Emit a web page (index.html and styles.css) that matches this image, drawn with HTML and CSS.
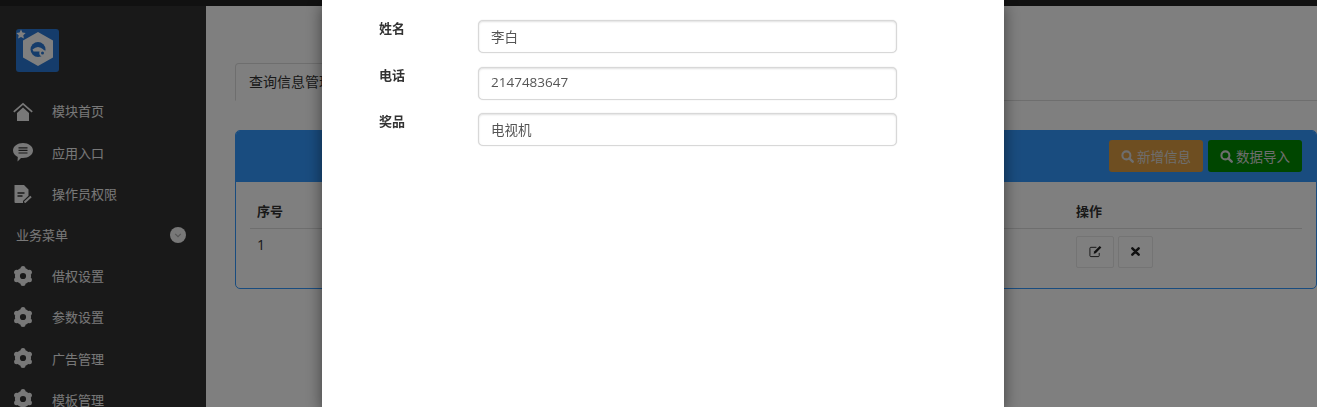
FILE: index.html
```html
<!DOCTYPE html>
<html lang="zh-CN">
<head>
    <meta charset="UTF-8">
    <meta name="viewport" content="width=device-width, initial-scale=1.0">
    <title>查询信息管理</title>
    <link rel="stylesheet" href="styles.css">
</head>
<body>
    <svg class="icon-defs" aria-hidden="true">
        <symbol id="icon-gear" viewBox="0 0 20 20">
            <circle cx="10" cy="10" r="5.6" fill="none" stroke="currentColor" stroke-width="5"/>
            <circle cx="10" cy="2.6" r="2.5" fill="currentColor"/>
            <circle cx="10" cy="17.4" r="2.5" fill="currentColor"/>
            <circle cx="3.6" cy="6.3" r="2.5" fill="currentColor"/>
            <circle cx="16.4" cy="6.3" r="2.5" fill="currentColor"/>
            <circle cx="3.6" cy="13.7" r="2.5" fill="currentColor"/>
            <circle cx="16.4" cy="13.7" r="2.5" fill="currentColor"/>
        </symbol>
        <symbol id="icon-search" viewBox="0 0 14 14">
            <circle cx="5.8" cy="5.8" r="4.3" fill="none" stroke="currentColor" stroke-width="2.2"/>
            <path d="M9 9l3.6 3.6" fill="none" stroke="currentColor" stroke-width="2.6" stroke-linecap="round"/>
        </symbol>
    </svg>

    <div class="topbar"></div>

    <div class="layout">
        <!-- 侧边栏 -->
        <aside class="sidebar">
            <div class="logo">
                <svg viewBox="0 0 43 43" width="43" height="43">
                    <rect width="43" height="43" rx="3" fill="#2a79d6"/>
                    <path d="M22 3l15 8.500v17l-15 8.500-15-8.500v-17z" fill="#fff"/>
                    <circle cx="22" cy="20.500" r="7.500" fill="#2a79d6"/>
                    <path d="M16.500 20.500q5.500-5 11 0l-1 2h-9z" fill="#fff"/>
                    <circle cx="26.500" cy="24" r="3.200" fill="#fff"/>
                    <circle cx="26.500" cy="24" r="1.500" fill="#2a79d6"/>
                    <path d="M5 .5l1.400 3 3.300.400-2.400 2.300.6 3.300L5 8l-2.900 1.500.6-3.300L.3 3.900l3.300-.4z" fill="#fff"/>
                </svg>
            </div>
            <nav class="menu">
                <a class="menu-item" href="#">
                    <svg class="menu-icon" viewBox="0 0 20 20">
                        <path d="M.8 10.800L10 2.800l9.200 8" fill="none" stroke="currentColor" stroke-width="1.700"/>
                        <path d="M4 12l6-5.500 6 5.500v8H4z" fill="currentColor"/>
                    </svg>
                    <span>模块首页</span>
                </a>
                <a class="menu-item" href="#">
                    <svg class="menu-icon" viewBox="0 0 20 20">
                        <path d="M10 1c5.500 0 10 3.400 10 7.500S15.500 16 10 16c-.7 0-1.300 0-2-.1L4.500 19.500l.3-4.600C2 13.700 0 11.300 0 8.500 0 4.400 4.500 1 10 1z" fill="currentColor"/>
                        <path d="M5.500 5.800h9M5.500 8.400h9M5.500 11h9" stroke="#333" stroke-width="1.200"/>
                    </svg>
                    <span>应用入口</span>
                </a>
                <a class="menu-item" href="#">
                    <svg class="menu-icon" viewBox="0 0 20 20">
                        <path d="M1.500 2h9.500l4.500 4.500v6.200L10 18v2H2.500a1 1 0 0 1-1-1z" fill="currentColor"/>
                        <path d="M4.500 10h7M4.500 13h5" stroke="#333" stroke-width="1.300"/>
                        <path d="M11.500 19.500l6.500-6" stroke="currentColor" stroke-width="2"/>
                    </svg>
                    <span>操作员权限</span>
                </a>
                <div class="menu-title">
                    <span>业务菜单</span>
                    <svg class="menu-toggle" viewBox="0 0 16 16" width="16" height="16">
                        <circle cx="8" cy="8" r="8" fill="currentColor"/>
                        <path d="M5.200 6.800L8 9.600l2.800-2.800" fill="none" stroke="#aaa" stroke-width="1.100"/>
                    </svg>
                </div>
                <a class="menu-item" href="#">
                    <svg class="menu-icon"><use href="#icon-gear"/></svg>
                    <span>借权设置</span>
                </a>
                <a class="menu-item" href="#">
                    <svg class="menu-icon"><use href="#icon-gear"/></svg>
                    <span>参数设置</span>
                </a>
                <a class="menu-item" href="#">
                    <svg class="menu-icon"><use href="#icon-gear"/></svg>
                    <span>广告管理</span>
                </a>
                <a class="menu-item" href="#">
                    <svg class="menu-icon"><use href="#icon-gear"/></svg>
                    <span>模板管理</span>
                </a>
            </nav>
        </aside>

        <!-- 主内容 -->
        <main class="content">
            <div class="tabs">
                <div class="tab">查询信息管理</div>
            </div>
            <section class="panel">
                <div class="panel-head">
                    <a class="btn btn-orange" href="#">
                        <svg class="btn-icon"><use href="#icon-search"/></svg>新增信息
                    </a>
                    <a class="btn btn-green" href="#">
                        <svg class="btn-icon"><use href="#icon-search"/></svg>数据导入
                    </a>
                </div>
                <div class="panel-body">
                    <table class="data-table">
                        <thead>
                            <tr>
                                <th>序号</th>
                                <th>姓名</th>
                                <th>电话</th>
                                <th>奖品</th>
                                <th class="col-action">操作</th>
                            </tr>
                        </thead>
                        <tbody>
                            <tr>
                                <td>1</td>
                                <td>李白</td>
                                <td>2147483647</td>
                                <td>电视机</td>
                                <td>
                                    <div class="row-actions">
                                        <a class="btn-mini btn-edit" href="#">
                                            <svg viewBox="0 0 14 14" width="13" height="13">
                                                <path d="M11 8.500v3a1 1 0 0 1-1 1H2a1 1 0 0 1-1-1V3.500a1 1 0 0 1 1-1h6" fill="none" stroke="currentColor" stroke-width="1"/>
                                                <path d="M5 9.300l.5-2.300L11.500 1l1.800 1.800L7.300 8.800z" fill="currentColor"/>
                                            </svg>
                                        </a>
                                        <a class="btn-mini btn-remove" href="#">
                                            <svg viewBox="0 0 10 10" width="9" height="9">
                                                <path d="M1.500 1.500l7 7M8.500 1.500l-7 7" fill="none" stroke="currentColor" stroke-width="2.800" stroke-linecap="round"/>
                                            </svg>
                                        </a>
                                    </div>
                                </td>
                            </tr>
                        </tbody>
                    </table>
                </div>
            </section>
        </main>
    </div>

    <!-- 弹出层 -->
    <div class="backdrop"></div>
    <div class="modal">
        <form class="modal-dialog">
            <label class="field">
                <span class="field-label">姓名</span>
                <input class="field-input" type="text" value="李白">
            </label>
            <label class="field">
                <span class="field-label">电话</span>
                <input class="field-input" type="text" value="2147483647">
            </label>
            <label class="field">
                <span class="field-label">奖品</span>
                <input class="field-input" type="text" value="电视机">
            </label>
        </form>
    </div>
</body>
</html>
```

FILE: styles.css
```css
* {
    box-sizing: border-box;
}
html, body {
    height: 100%;
}
body {
    margin: 0;
    overflow: hidden;
    background-color: #fff;
    color: #333;
    font-family: "Open Sans", "Noto Sans CJK SC", sans-serif;
    font-size: 13px;
}
a {
    text-decoration: none;
    color: inherit;
}
.icon-defs {
    display: none;
}
.topbar {
    height: 6px;
    background-color: #222;
}
.layout {
    display: flex;
    height: calc(100% - 6px);
}

/* 侧边栏 */
.sidebar {
    flex: none;
    width: 206px;
    padding-top: 23px;
    overflow: hidden;
    background-color: #333;
    color: #f0f0f0;
}
.logo {
    height: 43px;
    margin: 0 0 18.4px 16px;
}
.logo svg {
    display: block;
}
.menu-item {
    display: flex;
    align-items: center;
    gap: 19px;
    height: 41.2px;
    padding-left: 13px;
}
.menu-icon {
    flex: none;
    width: 20px;
    height: 20px;
}
.menu-title {
    display: flex;
    align-items: center;
    justify-content: space-between;
    height: 41.2px;
    padding: 0 20px 0 16px;
}

/* 主内容 */
.content {
    flex: 1;
    min-width: 0;
    padding: 57px 0 0 29px;
}
.tabs {
    height: 38px;
    border-bottom: 1px solid #ddd;
}
.tab {
    width: 124px;
    height: 38px;
    padding: 7px 0 0 13px;
    border: 1px solid #ddd;
    border-bottom-color: #fff;
    border-radius: 4px 4px 0 0;
    background-color: #fff;
    font-size: 14px;
}
.panel {
    height: 159px;
    margin-top: 29px;
    border: 1px solid #3399ff;
    border-radius: 5px;
    overflow: hidden;
}
.panel-head {
    display: flex;
    justify-content: flex-end;
    gap: 5px;
    height: 51px;
    padding: 9px 14px 0 0;
    background-color: #3399ff;
}
.btn {
    display: flex;
    align-items: center;
    justify-content: center;
    gap: 3px;
    width: 94px;
    height: 32px;
    border-radius: 3px;
    color: #ddd;
    font-size: 13.5px;
}
.btn-orange {
    background-color: #dc9c42;
}
.btn-green {
    background-color: #008c00;
}
.btn-icon {
    width: 13px;
    height: 13px;
}
.panel-body {
    padding: 18px 14px 0;
}
.data-table {
    width: 100%;
    border-collapse: collapse;
    table-layout: fixed;
}
.data-table th {
    height: 28px;
    padding: 0 7px 6px;
    border-bottom: 1px solid #ddd;
    text-align: left;
    font-weight: bold;
}
.data-table td {
    padding: 7px 7px 0;
    vertical-align: top;
    font-size: 14px;
    line-height: 18px;
}
.data-table th:nth-child(1),
.data-table td:nth-child(1) {
    width: 90px;
}
.col-action {
    width: 233px;
}
.row-actions {
    display: flex;
    gap: 4px;
}
.btn-mini {
    display: flex;
    align-items: center;
    justify-content: center;
    height: 32px;
    border: 1px solid #e8e8e8;
    border-radius: 2px;
    color: #222;
}
.btn-edit {
    width: 38px;
}
.btn-remove {
    width: 35px;
}

/* 弹出层 */
.backdrop {
    position: fixed;
    top: 0;
    right: 0;
    bottom: 0;
    left: 0;
    background-color: rgba(0, 0, 0, 0.5);
}
.modal {
    position: fixed;
    top: 0;
    bottom: 0;
    left: 322px;
    width: 682px;
}
.modal-dialog {
    display: flex;
    flex-direction: column;
    gap: 13.5px;
    height: 100%;
    padding: 20px 0 0 57px;
    background-color: #fff;
    box-shadow: 0 5px 15px rgba(0, 0, 0, 0.5);
}
.field {
    display: flex;
}
.field-label {
    width: 99px;
    font-weight: bold;
    line-height: 16px;
}
.field-input {
    width: 419px;
    height: 33px;
    padding: 0 12px 2px;
    border: 1px solid #d8d8d8;
    border-radius: 5px;
    outline: none;
    box-shadow: inset 0 1px 2px rgba(0, 0, 0, 0.12), 0 0 1px #ccc;
    color: #555;
    font-family: inherit;
    font-size: 13.5px;
}
```
